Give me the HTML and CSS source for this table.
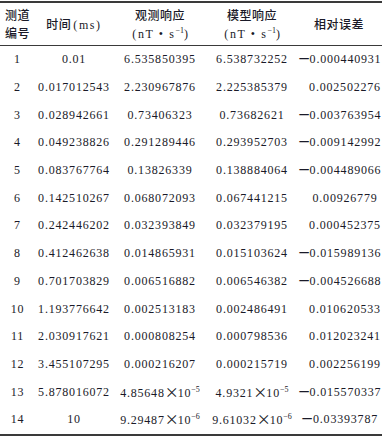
FILE: index.html
```html
<!DOCTYPE html>
<html lang="zh">
<head>
<meta charset="utf-8">
<title>表</title>
<link rel="stylesheet" href="styles.css">
</head>
<body>
<table class="data">
  <colgroup>
    <col class="c1"><col class="c2"><col class="c3"><col class="c4"><col class="c5">
  </colgroup>
  <thead>
    <tr>
      <th>测道<br>编号</th>
      <th>时间<span class="unit">(ms)</span></th>
      <th>观测响应<br><span class="unit">(nT • s<sup>−1</sup>)</span></th>
      <th>模型响应<br><span class="unit">(nT • s<sup>−1</sup>)</span></th>
      <th class="last">相对误差</th>
    </tr>
  </thead>
  <tbody>
    <tr><td>1</td><td>0.01</td><td>6.535850395</td><td>6.538732252</td><td class="err"><span class="neg">−</span>0.000440931</td></tr>
    <tr><td>2</td><td>0.017012543</td><td>2.230967876</td><td>2.225385379</td><td class="err">0.002502276</td></tr>
    <tr><td>3</td><td>0.028942661</td><td>0.73406323</td><td>0.73682621</td><td class="err"><span class="neg">−</span>0.003763954</td></tr>
    <tr><td>4</td><td>0.049238826</td><td>0.291289446</td><td>0.293952703</td><td class="err"><span class="neg">−</span>0.009142992</td></tr>
    <tr><td>5</td><td>0.083767764</td><td>0.13826339</td><td>0.138884064</td><td class="err"><span class="neg">−</span>0.004489066</td></tr>
    <tr><td>6</td><td>0.142510267</td><td>0.068072093</td><td>0.067441215</td><td class="err">0.00926779</td></tr>
    <tr><td>7</td><td>0.242446202</td><td>0.032393849</td><td>0.032379195</td><td class="err">0.000452375</td></tr>
    <tr><td>8</td><td>0.412462638</td><td>0.014865931</td><td>0.015103624</td><td class="err"><span class="neg">−</span>0.015989136</td></tr>
    <tr><td>9</td><td>0.701703829</td><td>0.006516882</td><td>0.006546382</td><td class="err"><span class="neg">−</span>0.004526688</td></tr>
    <tr><td>10</td><td>1.193776642</td><td>0.002513183</td><td>0.002486491</td><td class="err">0.010620533</td></tr>
    <tr><td>11</td><td>2.030917621</td><td>0.000808254</td><td>0.000798536</td><td class="err">0.012023241</td></tr>
    <tr><td>12</td><td>3.455107295</td><td>0.000216207</td><td>0.000215719</td><td class="err">0.002256199</td></tr>
    <tr><td>13</td><td>5.878016072</td><td>4.85648<span class="times">×</span>10<sup>−5</sup></td><td>4.9321<span class="times">×</span>10<sup>−5</sup></td><td class="err"><span class="neg">−</span>0.015570337</td></tr>
    <tr><td>14</td><td>10</td><td>9.29487<span class="times">×</span>10<sup>−6</sup></td><td>9.61032<span class="times">×</span>10<sup>−6</sup></td><td class="err"><span class="neg">−</span>0.03393787</td></tr>
  </tbody>
</table>
</body>
</html>
```

FILE: styles.css
```css
html, body {
  margin: 0;
  padding: 0;
  background: #ffffff;
}

body {
  padding-top: 1px;
}

.data {
  width: 382px;
  border-collapse: collapse;
  table-layout: fixed;
  color: #1a1a28;
  font-family: "Liberation Serif", "Noto Sans CJK SC", serif;
  font-size: 12px;
  border-top: 2px solid #3a3a3a;
  border-bottom: 2px solid #3a3a3a;
}

.c1 { width: 35px; }
.c2 { width: 78px; }
.c3 { width: 94px; }
.c4 { width: 90px; }
.c5 { width: 85px; }

.data th {
  font-family: "Noto Sans CJK SC", sans-serif;
  font-weight: 500;
  font-size: 12px;
  letter-spacing: 0.5px;
  line-height: 18px;
  height: 42px;
  padding: 0;
  text-align: center;
  vertical-align: middle;
  border-bottom: 1px solid #3a3a3a;
  white-space: nowrap;
}

.data th.last {
  padding-right: 1px;
}

.unit {
  font-family: "Liberation Serif", "Noto Sans CJK SC", serif;
  font-weight: 400;
  letter-spacing: 1.6px;
  margin-left: 2px;
}

.data td {
  height: 27.7px;
  padding: 0;
  text-align: center;
  vertical-align: middle;
  white-space: nowrap;
  letter-spacing: 0.8px;
}

.data td.err {
  padding-left: 11px;
}

.neg {
  display: inline-block;
  font-family: "Liberation Serif", serif;
  font-weight: 700;
  width: 12px;
  margin-left: -11px;
  text-align: center;
  transform: scale(1.7, 1.6);
  letter-spacing: 0;
}

.times {
  display: inline-block;
  font-family: "Noto Sans CJK SC", sans-serif;
  font-size: 14px;
  width: 13px;
  text-align: center;
  line-height: 1;
  letter-spacing: 0;
}

sup {
  font-size: 8px;
  line-height: 0;
  vertical-align: 5px;
  letter-spacing: 0;
}
```
